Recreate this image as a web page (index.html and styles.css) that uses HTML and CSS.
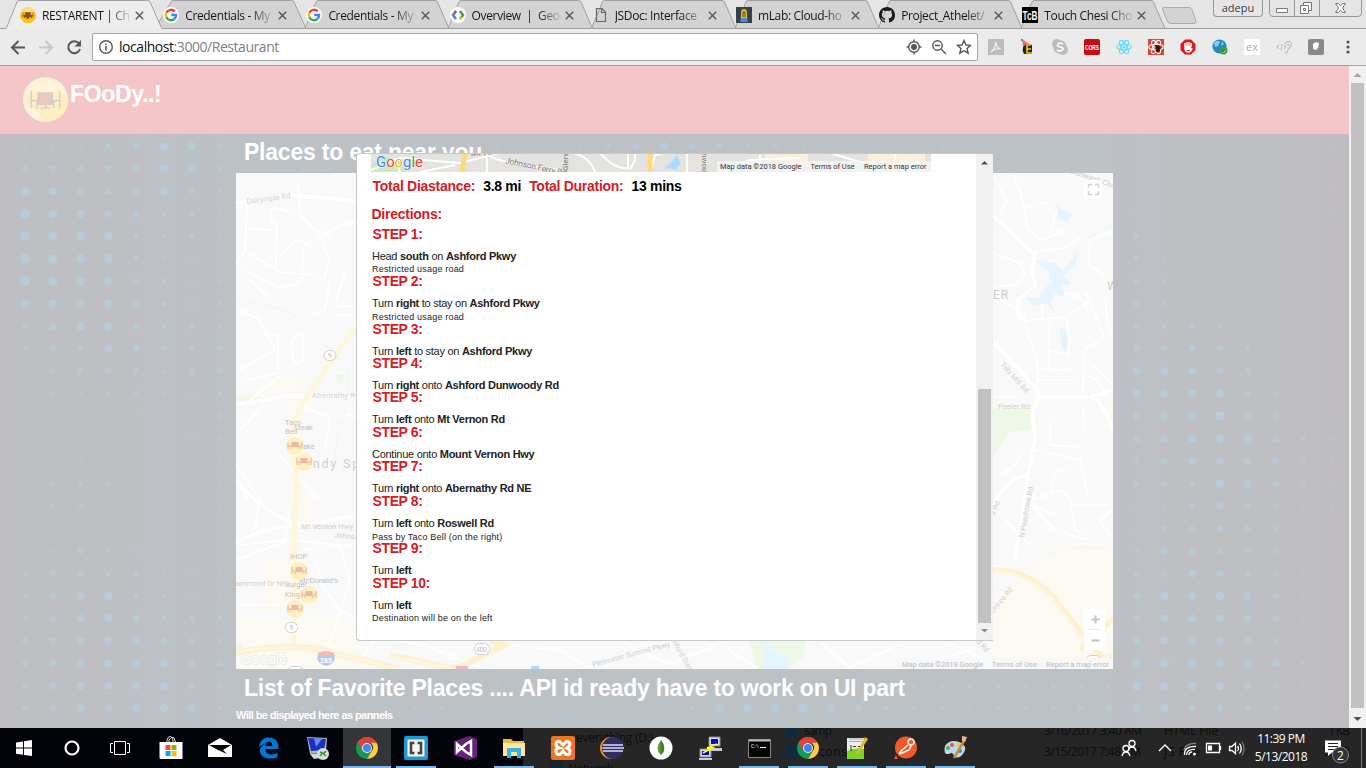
FILE: index.html
```html
<!DOCTYPE html>
<html lang="en">
<head>
<meta charset="utf-8">
<title>RESTARENT</title>
<link rel="stylesheet" href="styles.css">
</head>
<body>
<svg class="defs" width="0" height="0" aria-hidden="true">
  <defs>
    <symbol id="google" viewBox="0 0 16 16"><circle cx="8" cy="8" r="8" fill="#fff"/><path d="M3.3 5.7A5.2 5.2 0 0 1 11.7 4.3" fill="none" stroke="#ea4335" stroke-width="2.4"/><path d="M3.4 5.5A5.2 5.2 0 0 0 3.4 10.5" fill="none" stroke="#fbbc05" stroke-width="2.4"/><path d="M3.3 10.3A5.2 5.2 0 0 0 11.3 12" fill="none" stroke="#34a853" stroke-width="2.4"/><path d="M8.2 8H13.1A5.2 5.2 0 0 1 11.2 12.1" fill="none" stroke="#4285f4" stroke-width="2.4"/></symbol>
    <symbol id="food" viewBox="0 0 46 46"><circle cx="23" cy="23" r="23" fill="#ffdb75"/><path d="M0 23L8 15 18 28 26 46A23 23 0 0 1 0 23M8 15H39L46 21A23 23 0 0 1 20 46L8 31z" fill="#ffc40d"/><path d="M15 16H30V29H15zM21 29H25V33H18M8 14V32M8 24H14V32M38 14V32M38 24H32V32" fill="#a9412b" stroke="#554368" stroke-width="1.3"/></symbol>
    <symbol id="plate" viewBox="0 0 46 46"><circle cx="23" cy="23" r="23" fill="#fff3dc"/><path d="M0 23L8 15 38 15 46 21A23 23 0 0 1 24 46L8 30z" fill="#fdeec2"/><path d="M15 16H30V28H15z" fill="#ebcabd"/><path d="M15.500 16.500H30V28H15.500zM23 28V31M18 31.500H28M8.500 14V32M8.500 24H14.500V32M37.500 14V32M37.500 24H31.500V32" fill="none" stroke="#d3cdd2" stroke-width="1.400"/></symbol>
    <symbol id="pin" viewBox="0 0 20 20"><circle cx="10" cy="10" r="9" fill="#fdf0c0"/><path d="M3 6V13M3 10H6V13M17 6V13M17 10H14V13" stroke="#dcbd9b" fill="none"/><path d="M6.500 6H13.500V11H6.500z" fill="#eeb6ac"/></symbol>
    <symbol id="chrome" viewBox="0 0 22 22"><path d="M11 11L1.500 5.500A11 11 0 0 1 20.500 5.500H11z" fill="#dc4437"/><path d="M11 11L1.500 5.500A11 11 0 0 0 11 22L15.800 13.800z" fill="#0f9d58"/><path d="M20.500 5.500A11 11 0 0 1 11 22L15.800 13.800A5 5 0 0 0 13 5.500z" fill="#ffcd40"/><path d="M11 5.500H20.500A11 11 0 0 0 1.500 5.500L6.200 13.700z" fill="#dc4437"/><circle cx="11" cy="11" r="5" fill="#f1f1f1"/><circle cx="11" cy="11" r="4" fill="#4285f4"/></symbol>
    <symbol id="close" viewBox="0 0 9 9"><path d="M.8.8L8.200 8.200M8.200.8L.8 8.200" stroke="#5a5a5a" stroke-width="1.500"/></symbol>
    <symbol id="react" viewBox="0 0 16 16"><g fill="none" stroke="currentColor" stroke-width="1.100"><ellipse cx="8" cy="8" rx="7.300" ry="2.800"/><ellipse cx="8" cy="8" rx="7.300" ry="2.800" transform="rotate(60 8 8)"/><ellipse cx="8" cy="8" rx="7.300" ry="2.800" transform="rotate(120 8 8)"/></g><circle cx="8" cy="8" r="1.600" fill="currentColor"/></symbol>
  </defs>
</svg>

<header class="browser">
  <div class="strip">
    <svg class="tab-shapes" width="1366" height="29" viewBox="0 0 1366 29">
      <g fill="#d3d3d3" stroke="#9f9f9f">
        <path d="M1021 28.500L1032 2Q1032.500.5 1034 .5H1151Q1153 .5 1153.500 2L1165 28.500z"/>
        <path d="M878 28.500L889 2Q889.500.5 891 .5H1008Q1010 .5 1010.500 2L1022 28.500z"/>
        <path d="M735 28.500L746 2Q746.500.5 748 .5H865Q867 .5 867.500 2L879 28.500z"/>
        <path d="M591.500 28.500L602.500 2Q603 .5 604.500 .5H722Q724 .5 724.500 2L736 28.500z"/>
        <path d="M448 28.500L459 2Q459.500.5 461 .5H578.500Q580.500 .5 581 2L592.500 28.500z"/>
        <path d="M305 28.500L316 2Q316.500.5 318 .5H435Q437 .5 437.500 2L449 28.500z"/>
        <path d="M155 28.500L172 .5H291.500Q293.500 .5 294 2L306 28.500z"/>
      </g>
      <path d="M0 28.500H1366" stroke="#9f9f9f"/>
      <path d="M6 29L17 2Q17.500.5 19 .5H147.500Q149.500 .5 150 2L162 29z" fill="#ededed" stroke="#9f9f9f"/>
      <path d="M6.500 28.600H161.500" stroke="#ededed" stroke-width="2"/>
      <path d="M1163 7.500H1189Q1191 7.500 1192 9.500L1196 21.500Q1196 23.500 1194 23.500H1171Q1168.500 23.500 1167.500 21.500L1162.500 9.500Q1162 7.500 1164 7.500z" fill="#d3d3d3" stroke="#aaa"/>
    </svg>
    <div class="tab tab--active"><svg class="fav"><use href="#food"/></svg><span class="title">RESTARENT | Ch</span><svg class="x"><use href="#close"/></svg></div>
    <div class="tab"><svg class="fav"><use href="#google"/></svg><span class="title">Credentials - My</span><svg class="x"><use href="#close"/></svg></div>
    <div class="tab"><svg class="fav"><use href="#google"/></svg><span class="title">Credentials - My</span><svg class="x"><use href="#close"/></svg></div>
    <div class="tab"><svg class="fav" viewBox="0 0 16 16"><circle cx="8" cy="8" r="8" fill="#fff"/><path d="M6 4L3 8 6 12" fill="none" stroke="#4285f4" stroke-width="2.600"/><path d="M6 4L4.500 6" stroke="#ea4335" stroke-width="2.600"/><path d="M10 4L13 8 10 12" fill="none" stroke="#34a853" stroke-width="2.600"/><path d="M11.500 10L10 12" stroke="#fbbc05" stroke-width="2.600"/></svg><span class="title">Overview&nbsp; |&nbsp; Geo</span><svg class="x"><use href="#close"/></svg></div>
    <div class="tab"><svg class="fav" viewBox="0 0 16 16"><path d="M3.500 1.500H9L12.500 5V14.500H3.500zM8.500 1.500V5.500H12.500" fill="none" stroke="#666" stroke-width="1.200"/></svg><span class="title">JSDoc: Interface</span><svg class="x"><use href="#close"/></svg></div>
    <div class="tab"><svg class="fav" viewBox="0 0 16 16"><path d="M0 0H16V16H0z" fill="#33424d"/><path d="M5 14V6Q5 2 8 2T11 6V14z" fill="#f5b915"/><path d="M7 10V6Q8 3 9 6V10" fill="none" stroke="#33424d"/><path d="M4.500 11H11.500V15H4.500z" fill="#4c8fc5"/></svg><span class="title">mLab: Cloud-ho</span><svg class="x"><use href="#close"/></svg></div>
    <div class="tab"><svg class="fav" viewBox="0 0 16 16"><path fill="#1b1817" d="M8 0C3.580 0 0 3.580 0 8c0 3.540 2.290 6.530 5.470 7.590.4.070.55-.17.55-.38 0-.19-.01-.82-.01-1.490-2.010.37-2.530-.49-2.690-.94-.09-.23-.48-.94-.82-1.130-.28-.15-.68-.52-.01-.53.63-.01 1.080.58 1.230.82.720 1.210 1.870.87 2.330.66.070-.52.280-.87.510-1.070-1.780-.2-3.640-.89-3.640-3.950 0-.87.310-1.590.82-2.150-.08-.2-.36-1.020.08-2.120 0 0 .67-.21 2.200.82.640-.18 1.320-.27 2-.27s1.360.09 2 .27c1.530-1.040 2.200-.82 2.200-.82.440 1.100.160 1.920.08 2.120.51.560.82 1.270.82 2.150 0 3.070-1.870 3.750-3.650 3.950.29.250.54.730.54 1.480 0 1.070-.01 1.930-.01 2.200 0 .21.150.46.550.38A8 8 0 0 0 16 8c0-4.420-3.580-8-8-8"/></svg><span class="title">Project_Athelet/</span><svg class="x"><use href="#close"/></svg></div>
    <div class="tab"><svg class="fav" viewBox="0 0 16 16"><path d="M0 0H16V16H0z"/><text x=".5" y="13" font-size="13" textLength="15" lengthAdjust="spacingAndGlyphs" class="tcb">TcB</text></svg><span class="title">Touch Chesi Cho</span><svg class="x"><use href="#close"/></svg></div>
    <div class="winctl">
      <span class="user">adepu</span>
      <svg class="buttons" width="94" height="18" viewBox="0 0 94 18"><path d="M.5 0V13Q.5 16.500 4 16.500H89Q92.500 16.500 92.500 13V0M25.500 0V16M50.500 0V16" fill="none" stroke="#999"/><g fill="#fff" stroke="#777"><path d="M7.500 8.500H18.500V12.500H7.500z"/><path d="M34.500 2.500H42.500V10.500H34.500z"/><path d="M31.500 5.500H39.500V13.500H31.500z"/><path d="M34.500 8.500H36.500V10.500H34.500z"/><path d="M66.500 3.500H69.500L71.500 6 73.500 3.500H76.500L73.500 8 76.500 12.500H73.500L71.500 10 69.500 12.500H66.500L69.500 8z"/></g></svg>
    </div>
  </div>
  <div class="toolbar">
    <svg class="nav" width="92" height="36" viewBox="0 0 92 36"><g fill="none" stroke-width="2"><path d="M25 18.500H12.500M18.500 12L12 18.500 18.500 25" stroke="#555"/><path d="M39 18.500H51.500M45.500 12L52 18.500 45.500 25" stroke="#c8c8c8"/><path d="M79 14.500A6 6 0 1 0 80 20" stroke="#555"/></g><path d="M81 11V17.500H74.500z" fill="#555"/></svg>
    <div class="omnibox">
      <svg width="14" height="14" viewBox="0 0 14 14"><circle cx="7" cy="7" r="6.300" fill="none" stroke="#5a5a5a" stroke-width="1.400"/><path d="M7 6V10.500M7 3.500V5" stroke="#5a5a5a" stroke-width="1.600"/></svg>
      <span class="url">localhost<i>:3000/Restaurant</i></span>
      <svg class="omni-icons" width="66" height="18" viewBox="0 0 66 18"><g fill="none" stroke="#555" stroke-width="1.400"><circle cx="9" cy="9" r="5.300"/><path d="M9 1.500V4M9 14V16.500M1.500 9H4M14 9H16.500"/><circle cx="32.500" cy="7.500" r="4.700"/><path d="M36 11L41 16M30 7.500H35"/><path d="M59 2.500L61 7 65.500 7.400 62 10.600 63.200 15.200 59 12.700 54.800 15.200 56 10.600 52.500 7.400 57 7z"/></g><circle cx="9" cy="9" r="3" fill="#555"/></svg>
    </div>
    <div class="exts">
      <svg viewBox="0 0 16 16"><path d="M0 0H16V16H0z" fill="#bcbcbc"/><path d="M3 13Q8 9 7.500 3Q9 10 13 10Q8 8.500 3 13" fill="none" stroke="#eee" stroke-width="1.200"/></svg>
      <svg viewBox="0 0 16 16"><path d="M2 0L9 5 3 8z" fill="#ff5f8f"/><path d="M3 8Q7 3 12 6V15H4Q2 12 3 8" fill="#222"/><path d="M11 6H7V14H12M7 10H11" fill="none" stroke="#fc0" stroke-width="1.600"/><circle cx="2" cy="1" r="1.300" fill="#49b05c"/></svg>
      <svg viewBox="0 0 16 16"><circle cx="5" cy="5" r="5" fill="#bcbcbc"/><circle cx="11" cy="11" r="5" fill="#bcbcbc"/><circle cx="8" cy="8" r="6.800" fill="#bcbcbc"/><path d="M11 5Q8 3 6 5T8.500 8 10 11 5 11" fill="none" stroke="#fff" stroke-width="1.600"/></svg>
      <svg viewBox="0 0 16 16"><rect width="16" height="16" rx="2" fill="#c90b0b"/><text x="1" y="11" textLength="14" lengthAdjust="spacingAndGlyphs" class="cors">CORS</text></svg>
      <svg class="react-blue"><use href="#react"/></svg>
      <svg class="react-white" viewBox="0 0 16 16"><path d="M0 0H16V16H0z" fill="#db4437"/><use href="#react" width="16" height="16"/><path d="M7 6H11L13 9 11 13H8z" fill="#3a1713"/></svg>
      <svg viewBox="0 0 16 16"><path d="M5 .5H11L15.500 5V11L11 15.500H5L.5 11V5z" fill="#e01717"/><path d="M5 8V4M7 8V3M9 8V3M11 8V4M5 8V10Q6 13 8 13Q11 13 12 9" fill="none" stroke="#fff" stroke-width="1.500"/><path d="M5 7H11V11H6z" fill="#fff"/></svg>
      <svg viewBox="0 0 16 16"><circle cx="7.500" cy="7.500" r="7" fill="#1d87c8"/><path d="M2 4Q6 0 8 3L6 7 3 8M10 2L12 5 9 7" fill="#8acdf0"/><circle cx="11.500" cy="11.500" r="3" fill="none" stroke="#4c9c2c" stroke-width="2"/></svg>
      <svg viewBox="0 0 16 16"><path d="M0 0H16V16H0z" fill="#fff"/><text x="2" y="11.500" class="ex">ex</text></svg>
      <svg viewBox="0 0 16 16"><path d="M3 6L1 8 3 10M6 5L5 11M8 6L10 8 8 10M9 5Q11 1 14 3T14 8 11 13 9 13M11 6Q13 4 13 7" fill="none" stroke="#bdbdbd" stroke-width="1.100"/></svg>
      <svg viewBox="0 0 16 16"><rect width="16" height="16" rx="2" fill="#888"/><path d="M5 5Q7 2 11 4Q11 9 8 11L5 10z" fill="#fff"/></svg>
      <svg class="menu" viewBox="0 0 4 16"><g fill="#555"><circle cx="2" cy="3" r="1.600"/><circle cx="2" cy="8" r="1.600"/><circle cx="2" cy="13" r="1.600"/></g></svg>
    </div>
  </div>
</header>

<div class="viewport">
  <main class="page">
    <nav class="brandbar"><svg class="logo"><use href="#plate"/></svg><h1>FOoDy..!</h1></nav>
    <section class="content">
      <svg id="dots" class="dots" width="1349" height="594" viewBox="0 134 1349 594"></svg>
      <div class="column">
        <h2 class="near">Places to eat near you...</h2>
        <svg class="map" viewBox="236 173 877 496">
          <path d="M236 173H1113V669H236z" fill="#f9f9f9"/>
          <g fill="#fcfaf3"><path d="M268 380L298 377 299 394 268 395zM290 395L314 398 300 430 285 428zM300 494H315L312 520 300 530zM262 560L286 558 300 575 298 605 262 612zM236 620H360V669H236zM1100 420L1113 402V436z"/><path d="M1040 560Q1060 535 1113 548V669H993V600Q1020 570 1040 560z"/></g>
          <g fill="#e5f4ff"><path d="M1056 203L1060 209 1072 214 1067 222 1059 218zM1032 259L1056 264 1064 272 1078 251 1075 265 1063 275 1072 284 1062 285 1064 296 1054 294 1051 304 1055 314 1047 303 1033 306 1025 298 1038 298 1050 282 1048 271zM1060 329L1066 329 1068 345 1065 352 1061 342z"/></g>
          <g fill="#edf9e6"><path d="M993 408H1033L1030 430 1010 432 993 456zM336 375L344 374 343 382 338 384zM236 398Q250 394 262 396L260 400 236 402zM236 643H242V655H236zM750 641H806L803 658 785 669H757z"/></g><path d="M764 643L780 655 791 658 786 669H763z" fill="#e3f5ff"/>
          <g fill="none" stroke="#eef6fc" stroke-width="1.200"><path d="M236 302Q280 303 300 320L330 349 348 368V400L338 430 334 470M993 226L1010 240 1032 257M993 286L1025 298M1063 272L1083 240 1113 225M1032 573L1045 556 1080 547 1113 549M993 593L1020 583"/></g>
          <g fill="none" stroke="#fff" stroke-width="1.700">
            <path d="M247 204L245 250 236 264M247 252L280 272 312 275M275 205Q265 218 277 224L276 268M250 229L274 230M272 207L298 214M298 182L300 215 320 235 329 260 324 280 305 272M280 258L290 245Q300 235 310 247M302 270L304 245 340 226 357 222M245 270L278 287 295 285 305 275M315 228L330 236M250 280L270 298M310 315L325 310 330 280 M345 273L336 300M338 306H357M335 315H356M238 310L258 318 275 350 236 372M264 335H278V373L243 381M292 340Q303 325 303 345V360Q293 370 292 350zM250 400L280 376M236 435L263 405V395L250 398M300 405L330 418 325 450M340 420Q350 410 357 420M236 465L260 500 255 530M290 505L285 540 240 545M236 560L290 540 340 545 350 580 330 645M300 550L350 545M315 560L325 590 340 610 357 620M245 585L285 585M236 605H290M280 455L300 480 320 500M236 480L248 500"/>
            <path d="M993 176L1007 200 1000 215M1013 175L1020 190 1028 230 1042 240 1065 230M1028 207L1045 202 1055 215 1050 235M1032 252L1064 248 1080 238M1113 230L1090 240 1088 265 1105 275M993 253L1020 263 1025 275 1015 285 993 287M993 294L1025 315M1042 305V320M1024 320L1038 365 1037 395M1023 321L1066 317 1088 302 1085 290M1066 317L1070 340 1068 355 1048 350M1050 321L1048 365M1037 369L1070 370M1035 380H1078M1084 350L1104 337 1087 293M1084 353L1083 395M1084 376Q1100 375 1105 397M1091 364L1113 384M1066 292Q1090 300 1086 314M1106 300Q1105 320 1111 335M1083 411L1084 430M1050 420V445L1078 447M1035 450L1080 460 1088 495M1051 492L1055 472 1067 469M1038 486L1030 505 1058 515M1033 500L1060 490 1070 498 1075 530 1083 533M1070 505H1110M1032 506L1055 530 1086 540M1112 510L1100 520 1110 535M1005 520L1030 545M1001 475L1015 465 1023 453M993 397H1015"/>
            <path d="M362 658L375 640 420 643 480 668M500 645L560 650 590 669M620 641L670 665 720 643 757 669M820 642L850 668 900 644M910 669L975 648M950 643L1000 668"/>
          </g>
          <g fill="none" stroke="#fff" stroke-width="3.500"><path d="M236 203L290 195 357 201M236 404L290 396 357 397M236 543Q265 525 300 526L357 515M236 480Q265 515 300 525M993 215L1035 255 1032 270 1035 285 1018 300 1018 315 1026 321M993 341L1015 365 1037 390 1040 397H1090L1113 390M1090 397Q1105 402 1112 430M1038 397L1032 415 1035 440 1028 475 1015 560"/><path d="M993 506Q1004 480 1028 475M993 567L1030 576"/></g>
          <g fill="none"><path d="M357 325Q335 355 315 385 285 425 292 450 300 490 294 530V650" stroke="#fff7da" stroke-width="5"/><path d="M236 653Q300 640 340 655L400 669M993 570Q1030 570 1055 600L1095 650 1113 669M1080 650L1098 630 1113 620M390 655L455 669 505 645 490 641M1080 669L1113 655" stroke="#fff1cd" stroke-width="6"/><path d="M236 652Q300 641 340 655L400 669M993 572Q1030 571 1055 603L1095 654M390 656L455 669" stroke="#fff6e0" stroke-width="3"/></g>
          <g class="roadname"><text x="247" y="204" transform="rotate(-8 247 204)" textLength="44">Dalrymple Rd</text><text x="312" y="398" textLength="60">Abernathy Rd NE</text><text x="301" y="529" textLength="52">Mt Vernon Hwy</text><text x="334" y="537" transform="rotate(7 334 537)">Johnson</text><text x="236" y="586" textLength="50">ammond Dr NE</text><text x="1070" y="173" transform="rotate(19 1070 173)" textLength="48">Dunwoody Club</text><text x="1000" y="365" transform="rotate(48 1000 365)">Tilly Mill Rd</text><text x="998" y="409">Peeler Rd</text><text x="1024" y="538" transform="rotate(-80 1024 538)">N Peachtree Rd</text><text x="993" y="614" transform="rotate(-50 993 614)">chtree Rd</text><text x="994" y="516" transform="rotate(-65 994 516)">d Rd</text><text x="593" y="667" transform="rotate(-15 593 667)" textLength="80">Perimeter Summit Pkwy</text><text x="672" y="642" transform="rotate(60 672 642)">hford Dun</text><text x="976" y="642" transform="rotate(47 976 642)">d Rd</text></g>
          <g class="place"><text x="285" y="425">Taco</text><text x="285" y="434">Bell</text><text x="294" y="430">Steak</text><text x="303" y="449">ake</text><text x="290" y="559">IHOP</text><text x="285" y="587">Burger</text><text x="285" y="597">King</text><text x="299" y="583">McDonald's</text></g>
          <g class="city"><text x="313" y="468" textLength="58">ndy Spri</text><text x="993" y="299">ER</text><text x="1107" y="290">W</text></g>
          <g><use href="#pin" x="285" y="436" width="20" height="20"/><use href="#pin" x="294" y="452" width="20" height="20"/><use href="#pin" x="289" y="561" width="20" height="20"/><use href="#pin" x="299" y="585" width="20" height="20"/><use href="#pin" x="285" y="599" width="20" height="20"/></g>
          <g fill="#fff" stroke="#d0d0d0"><rect x="324" y="350.500" width="12" height="10" rx="5"/><rect x="285.500" y="622.500" width="12" height="10" rx="5"/><rect x="474.500" y="643.500" width="15" height="11" rx="5"/><rect x="288.500" y="666.500" width="14" height="10" rx="4"/><rect x="1086" y="655.500" width="15" height="10" rx="5"/></g><g class="shieldtext"><text x="328" y="358">9</text><text x="289.500" y="630">9</text><text x="476" y="651.500">400</text></g>
          <path d="M318 654Q326 650 334 654Q337 663 326 666Q315 663 318 654" fill="#b8c8e8"/><path d="M318 653Q326 649 334 653V656H318z" fill="#f5b9b4"/><text x="320" y="663" font-size="7" fill="#fff" class="bold">285</text><path d="M456 666H468V669H456z" fill="#efb9c5"/><path d="M531 666H539V669H531z" fill="#acdcf6"/>
          <text x="241" y="664" textLength="46" class="maplogo">Google</text>
          <path d="M897 658H1113V669H897z" fill="#f8f8f8"/><g class="legal"><text x="902" y="666.500" textLength="81">Map data ©2018 Google</text><text x="992" y="666.500" textLength="45">Terms of Use</text><text x="1046" y="666.500" textLength="63">Report a map error</text></g>
          <path d="M1084 180H1102V199H1084zM1084 609H1105V650H1084z" fill="#fff"/><path d="M1088.500 188V184.500H1092M1095 184.500H1098.500V188M1098.500 191V194.500H1095M1092 194.500H1088.500V191" fill="none" stroke="#d1d1d1" stroke-width="1.500"/><path d="M1091.500 619.500H1099.500M1095.500 615.500V623.500M1091.500 640.500H1099.500" stroke="#c4c4c4" stroke-width="2"/><path d="M1088 629.500H1102" stroke="#eee"/>
        </svg>
        <h2 class="list">List of Favorite Places .... API id ready have to work on UI part</h2>
        <p class="panels">Will be displayed here as pannels</p>
      </div>
    </section>
  </main>
  <div class="pagebar"><svg width="17" height="17"><path d="M4.500 11L8.500 7 12.500 11z" fill="#a3a3a3"/></svg><div class="thumb"></div><svg width="17" height="17"><path d="M4.500 9L8.500 13 12.500 9z" fill="#505050"/></svg></div>

  <div class="modal">
    <div class="modal-body">
      <svg class="minimap" width="560" height="19" viewBox="371 153 560 19">
        <path d="M371 153H931V172H371z" fill="#e5e3df"/><path d="M371 164L385 156 403 163 410 172H371z" fill="#cceac1"/><path d="M765 153H808V165L765 160zM868 153H925V172H868z" fill="#faf0dc"/>
        <path d="M664 169L673 160 677 155 680 163 676 170 670 168z" fill="#a9daff"/>
        <g fill="none" stroke="#fff" stroke-width="2"><path d="M371 170L400 158 460 163 500 153M400 172L395 158M420 172L455 165M490 157L510 163 560 170M487 172V153M573 153Q590 157 595 172M600 153Q615 170 628 168V153M630 170L635 160V153M650 172L655 155 664 153M687 153V172M718 172L750 160 800 158M760 172V155M830 153L860 162H920M895 153V172"/></g>
        <path d="M462 172L465 153M650 153V172" stroke="#ffda7a" stroke-width="5"/>
        <g class="miniroad"><text x="471" y="156" transform="rotate(-4 471 156)">Mt Vernon Hwy</text><text x="505" y="163" transform="rotate(12 505 163)">Johnson Ferry Rd</text><text x="568" y="171" transform="rotate(-90 568 171)">Glenri</text><text x="702" y="153" transform="rotate(90 702 153)">nwood</text></g>
        <text x="376" y="167" textLength="47" lengthAdjust="spacingAndGlyphs" class="glogo"><tspan fill="#4285f4">G</tspan><tspan fill="#ea4335">o</tspan><tspan fill="#fbbc05">o</tspan><tspan fill="#4285f4">g</tspan><tspan fill="#34a853">l</tspan><tspan fill="#ea4335">e</tspan></text>
        <path d="M717 161H931V172H717z" fill="#f5f5f5" opacity=".8"/><g class="legal dark"><text x="720" y="169.300" textLength="81.500">Map data ©2018 Google</text><text x="810.500" y="169.300" textLength="44">Terms of Use</text><text x="864" y="169.300" textLength="62.500">Report a map error</text></g>
      </svg>
      <p class="totals"><b>Total Diastance:</b><strong>3.8 mi</strong><b>Total Duration:</b><strong>13 mins</strong></p>
      <h3 class="dirs">Directions:</h3>
      <ol class="steps">
        <li><h4>STEP 1:</h4><p>Head <b>south</b> on <b>Ashford Pkwy</b></p><small>Restricted usage road</small></li>
        <li><h4>STEP 2:</h4><p>Turn <b>right</b> to stay on <b>Ashford Pkwy</b></p><small>Restricted usage road</small></li>
        <li><h4>STEP 3:</h4><p>Turn <b>left</b> to stay on <b>Ashford Pkwy</b></p></li>
        <li><h4>STEP 4:</h4><p>Turn <b>right</b> onto <b>Ashford Dunwoody Rd</b></p></li>
        <li><h4>STEP 5:</h4><p>Turn <b>left</b> onto <b>Mt Vernon Rd</b></p></li>
        <li><h4>STEP 6:</h4><p>Continue onto <b>Mount Vernon Hwy</b></p></li>
        <li><h4>STEP 7:</h4><p>Turn <b>right</b> onto <b>Abernathy Rd NE</b></p></li>
        <li><h4>STEP 8:</h4><p>Turn <b>left</b> onto <b>Roswell Rd</b></p><small>Pass by Taco Bell (on the right)</small></li>
        <li><h4>STEP 9:</h4><p>Turn <b>left</b></p></li>
        <li><h4>STEP 10:</h4><p>Turn <b>left</b></p><small>Destination will be on the left</small></li>
      </ol>
    </div>
    <div class="modalbar"><svg width="17" height="17"><path d="M5 10.500L8.500 7 12 10.500z" fill="#505050"/></svg><div class="thumb"></div><svg width="17" height="17"><path d="M5 6L8.500 9.500 12 6z" fill="#8a8a8a"/></svg></div>
  </div>
</div>

<footer class="taskbar">
  <svg class="ghost" width="843" height="40" viewBox="523 728 843 40"><path d="M786 728H797V737H786zM786 744H797V758H786z" fill="#102a3c"/><circle cx="556" cy="765" r="7" fill="#15242d"/><g class="ghosttext"><text x="576" y="742" textLength="77">everything (D:)</text><text x="568" y="773" textLength="45">Network</text><text x="804" y="735" textLength="28">samp</text><text x="804" y="756" textLength="43">bycons</text><text x="1044" y="735" textLength="98">3/16/2017 3:40 AM</text><text x="1044" y="756" textLength="97">3/15/2017 7:48 AM</text><text x="1164" y="735" textLength="54">HTML File</text><text x="1164" y="756" textLength="36">JS File</text><text x="1328" y="735" textLength="22">1 KB</text><text x="1322" y="756" textLength="28">15 KB</text></g></svg>
  <div class="sys">
    <svg viewBox="0 0 24 24"><path d="M4 6.500L11 5.500V11.500H4zM12 5.300L20 4V11.500H12zM4 12.500H11V18.700L4 17.700zM12 12.500H20V20L12 18.900z" fill="#fff"/></svg>
    <svg viewBox="0 0 24 24"><circle cx="12" cy="12" r="6.500" fill="none" stroke="#fff" stroke-width="2.200"/></svg>
    <svg viewBox="0 0 24 24"><path d="M6.500 5.500H17.500V18.500H6.500zM5 7.500H2.500V16.500H5M19 7.500H21.500V16.500H19" fill="none" stroke="#fff"/></svg>
  </div>
  <div class="apps">
    <span><svg viewBox="0 0 24 24"><path d="M.5 6H23.500V23H2Q.5 23 .5 21.500z" fill="#fff"/><path d="M8 6V4Q9 0 11.500 .5T14 6M10 6V4Q12 0 15 2L16.500 6" fill="none" stroke="#ddd"/><path d="M6.500 9H11.500V14H6.500z" fill="#f35325"/><path d="M12.500 9H17.500V14H12.500z" fill="#81bc06"/><path d="M6.500 15H11.500V20H6.500z" fill="#05a6f0"/><path d="M12.500 15H17.500V20H12.500z" fill="#ffba08"/></svg></span>
    <span><svg viewBox="0 0 24 24"><path d="M0 9L12 2 24 9V21H0z" fill="#fff"/><path d="M1 9H23L15 14 19 18 10 14z" fill="#000"/></svg></span>
    <span><svg viewBox="0 0 24 24"><path d="M2 11C3 4 7 1.500 12 1.500c7 0 10 5 9.500 11.500H8.500c0 6 7 7 12 3.500V21c-6 3-16 2-17.500-5C2.500 12 5 9 9 7.500 5.500 8 3.500 9.500 2 11zM8.500 10H15.500Q15 5.500 12 5.500T8.500 10z" fill="#0078d7"/></svg></span>
    <span><svg viewBox="0 0 24 24"><path d="M1 1L21 2 20 16 4 18z" fill="#aab5c8"/><path d="M2 2L20 3 18 14 5 15z" fill="#1732bd"/><path d="M8 2L16 3 10 11z" fill="#6d8ef0"/><path d="M4 18L18 17 19 21 8 23z" fill="#d8d8d8"/><circle cx="17" cy="18" r="6" fill="#ddd"/><path d="M14 20L16.500 17 14 16M20 15L17.500 18 20 20" stroke="#2e963c" stroke-width="1.500" fill="none"/></svg></span>
    <span class="active"><svg viewBox="0 0 24 24"><use href="#chrome" x="1" y="1" width="22" height="22"/></svg></span>
    <span class="running"><svg viewBox="0 0 24 24"><rect width="24" height="24" rx="2" fill="#1b9ad6"/><rect x="3.500" y="3.500" width="17" height="17" fill="#f6f6f6"/><path d="M10.500 7H7V17H10.500M13.500 7H17V17H13.500" fill="none" stroke="#444" stroke-width="2.600"/></svg></span>
    <span><svg viewBox="0 0 24 24"><path d="M17 0L24 3V21L17 24 1 19V5z" fill="#68217a"/><path d="M4 8L13 16 18 19V5L13 8 4 16z" fill="none" stroke="#fff" stroke-width="2.500"/></svg></span>
    <span class="running"><svg viewBox="0 0 24 24"><path d="M1 3H9L11 5H22V20H1z" fill="#e9b949"/><path d="M1 7H23V20H1z" fill="#ffe69b"/><path d="M5 12H19V22H15V16H9V22H5z" fill="#38b1eb"/></svg></span>
    <span><svg viewBox="0 0 24 24"><rect width="24" height="24" rx="2" fill="#ee7623"/><path d="M8.500 5.500Q5 5 5 8T8 12Q4 13 5 16T9 18.500L12 15 15 18.500Q19 19 19 16T16 12Q19 10 19 8T15.500 5.500L12 9z" fill="none" stroke="#fff" stroke-width="3"/></svg></span>
    <span><svg viewBox="0 0 24 24"><circle cx="11" cy="12" r="11" fill="#f7941e"/><circle cx="13" cy="12" r="11" fill="#322d60"/><path d="M3 9H23M2.500 12H24M3 15H23" stroke="#e1def3" stroke-width="1.700"/></svg></span>
    <span><svg viewBox="0 0 24 24"><circle cx="12" cy="12" r="11.500" fill="#fff"/><path d="M12 4Q19 13 12 19Q5 13 12 4" fill="#589636"/><path d="M12 4Q18 13 12 19z" fill="#3d7c35"/></svg></span>
    <span><svg viewBox="0 0 24 24"><path d="M11 1H22V10H11zM2 13H13V21H2z" fill="#ddd" stroke="#888"/><path d="M13 3H20V8H13zM4 15H11V19H4z" fill="#00f"/><path d="M10 12H24V15H10zM1 22H14V24H1z" fill="#ccc"/><path d="M19 8L9 12H14L5 17" fill="none" stroke="#ff0" stroke-width="1.800"/></svg></span>
    <span class="running"><svg viewBox="0 0 24 24"><path d="M1.500 3.500H23.500V21.500H1.500z" fill="#050505" stroke="#888"/><path d="M2 3.500H23V5.500H2z" fill="#bbb"/><text x="4" y="12" textLength="8" class="cmd">C:\</text><path d="M13 11.500H19" stroke="#fff"/></svg></span>
    <span class="running"><svg viewBox="0 0 24 24"><use href="#chrome" x="1" y="1" width="22" height="22"/></svg></span>
    <span class="running"><svg viewBox="0 0 24 24"><path d="M2 2H19V23H2z" fill="#eee"/><path d="M2 15Q10 11 19 13V23H2z" fill="#7dd223"/><path d="M4 3H18M4 5.500H17" stroke="#aaa"/><path d="M6 9V15M8 10.500H11M13 10.500H17" stroke="#333"/><path d="M20 1L23 3 14 17 11 19 12 16z" fill="#e8b827"/></svg></span>
    <span class="running"><svg viewBox="0 0 24 24"><circle cx="12" cy="11.500" r="11" fill="#f15a29"/><path d="M2 19L4 23 0 23z" fill="#f15a29"/><path d="M14 9L7 15 5 18M18 8L15 14 8 17 5 18M17 3A3 3 0 1 0 17.200 3" fill="none" stroke="#fff" stroke-width="1.400"/></svg></span>
    <span class="running"><svg viewBox="0 0 24 24"><path d="M2 10Q7 3 16 6 26 10 20 18 15 24 11 20 10 15 6 18 0 19 2 10" fill="#b9d9ed"/><circle cx="5" cy="12" r="2" fill="#4da94d"/><circle cx="9" cy="9" r="2" fill="#d55"/><circle cx="15" cy="9" r="2" fill="#f2ca48"/><circle cx="17" cy="15" r="2" fill="#2a92c8"/><path d="M11 22L22 3" stroke="#cc8a37" stroke-width="2.500"/><path d="M19 0L24 1 22 6 19 5z" fill="#e2b98d"/></svg></span>
  </div>
  <svg class="tray" width="132" height="40" viewBox="1116 728 132 40"><g fill="none" stroke="#fff" stroke-width="1.300"><circle cx="1132" cy="743.500" r="3"/><path d="M1128 751Q1129 747 1132 747T1136 751"/><circle cx="1126" cy="748.500" r="3"/><path d="M1122 756Q1123 752 1126 752T1130 756"/><path d="M1159 751L1165 745 1171 751"/><path d="M1189 755Q1189 752 1192 752M1186.500 755Q1187 749 1195 749.500M1184.500 755Q1184 746 1196 746.500" /><path d="M1184 750Q1186 743 1196 743.500" stroke="#888"/><path d="M1206.500 743.500H1219.500V752.500H1206.500zM1220.500 746V750"/><path d="M1229.500 746.500H1232L1235.500 743V753.500L1232 750.500H1229.500z"/><path d="M1237.500 746Q1239.500 748.500 1237.500 751M1239.500 743.500Q1243 748.500 1239.500 753.500"/><path d="M1242 741.500Q1246 748.500 1242 755.500" stroke="#777"/></g><path d="M1208 745.500H1212V750.500H1208z" fill="#fff"/><circle cx="1194.500" cy="754" r="1.500" fill="#fff"/></svg>
  <div class="clock"><span>11:39 PM</span><span>5/13/2018</span></div>
  <svg class="action" width="42" height="40" viewBox="1324 728 42 40"><path d="M1325 740.500H1341V752.500H1332L1328 756V752.500H1325z" fill="#fff"/><path d="M1328 743.500H1338M1328 746.500H1338M1328 749.500H1335" stroke="#222"/><circle cx="1340.500" cy="755" r="8" fill="#333" stroke="#888"/><text x="1337" y="759.500" class="badge">2</text><path d="M1361.500 728V768" stroke="#777"/></svg>
</footer>
<script src="dots.js"></script>
</body>
</html>
```
FILE: styles.css
```css
* { box-sizing: border-box; }
body { margin: 0; width: 1366px; height: 768px; overflow: hidden; display: flex; flex-direction: column; font-family: "Liberation Sans", Arial, sans-serif; }
h1, h2, h3, h4, p, ol { margin: 0; padding: 0; }
.defs { position: absolute; }
svg { display: block; flex: none; }

.browser { height: 66px; background: #ebebeb; border-bottom: 1px solid #a3a3a3; font-family: "Open Sans", "Noto Sans", sans-serif; }
.strip { position: relative; display: flex; height: 29px; padding-left: 20px; background: #e5e5e5; }
.tab-shapes { position: absolute; left: 0; top: 0; }
.tab { position: relative; display: flex; align-items: center; width: 143.200px; height: 29px; padding-top: 1px; }
.fav { width: 16px; height: 16px; }
.title { width: 88px; margin-left: 6px; overflow: hidden; white-space: nowrap; font-size: 12px; letter-spacing: -.35px; color: #151515; -webkit-mask-image: linear-gradient(90deg, #000 74%, transparent 104%); mask-image: linear-gradient(90deg, #000 74%, transparent 104%); }
.x { width: 9px; height: 9px; margin-left: 5px; }
.tcb { fill: #fff; font-family: "Liberation Sans"; font-weight: bold; }
.winctl { position: relative; display: flex; margin-left: 47.400px; gap: 6px; }
.user { width: 50px; height: 17px; border: 1px solid #999; border-top: 0; border-radius: 0 0 4px 4px; text-align: center; font-size: 11px; line-height: 16px; color: #333; text-shadow: 0 0 2px #fff; }
.toolbar { display: flex; height: 36px; align-items: center; }
.omnibox { display: flex; align-items: center; width: 886px; height: 28px; padding: 0 6px 0 6px; background: #fff; border: 1px solid #a4a4a4; border-radius: 2px; }
.url { margin-left: 6px; font-size: 14px; letter-spacing: -.45px; line-height: 20px; color: #111; }
.url i { font-style: normal; color: #808080; }
.omni-icons { margin-left: auto; }
.exts { display: flex; gap: 16px; margin-left: 10px; align-items: center; }
.exts svg { width: 16px; height: 16px; }
.exts .menu { width: 4px; margin-left: 6px; }
.react-blue { color: #61dafb; }
.react-white { color: #fff; }
.cors { fill: #fff; font: bold 8px "Liberation Sans"; }
.ex { fill: #aaa; font: 11px "Open Sans"; }

.viewport { position: relative; display: flex; height: 662px; }
.page { width: 1349px; }
.brandbar { display: flex; height: 68px; padding: 11px 0 0 23px; background: #f4c6c8; }
.logo { width: 45px; height: 45px; }
.brandbar h1 { margin-left: 2px; font-size: 23px; line-height: 34px; color: #fff; letter-spacing: -.35px; }
.content { position: relative; height: 594px; background: linear-gradient(90deg, #bfbfc2 0, #bebfc3 90px, #bcc1c6 230px, #bcc1c6 1100px, #bebfc3 1200px, #bebfc3 1290px, #bfbbc1 1349px); }
.dots { position: absolute; left: 0; top: 0; }
.dots circle { fill: #b6cfe0; }
.column { position: relative; width: 877px; margin-left: 236px; }
.column h2 { padding-left: 8px; font-size: 23px; color: #fff; white-space: nowrap; letter-spacing: -.22px; }
.near { height: 39px; line-height: 36px; }
.map { width: 877px; height: 496px; }
.map text { font-family: Roboto, sans-serif; }
.roadname { font-size: 7.500px; fill: #cfcfcf; }
.place { font-size: 7.500px; fill: #c0c0c0; }
.city { font-size: 12px; fill: #cccdd0; letter-spacing: 1px; }
.shieldtext { font-size: 6.500px; fill: #bbb; }
.bold { font-weight: bold; }
.maplogo { font-size: 15px; fill: #fff; stroke: #e0e0e0; stroke-width: 1px; paint-order: stroke; }
.legal { font-size: 7.500px; fill: #bbb; }
.legal.dark { fill: #333; font-family: Roboto, sans-serif; }
.list { height: 36px; line-height: 38px; }
.panels { font-size: 11px; font-weight: bold; line-height: 20px; color: #fff; letter-spacing: -.57px; }
.pagebar { display: flex; flex-direction: column; width: 17px; background: #f1f1f1; }
.pagebar .thumb { width: 13px; height: 625px; margin-left: 2px; background: #c1c1c1; }

.modal { position: absolute; left: 356px; top: 87px; width: 637px; height: 488px; display: flex; overflow: hidden; background: #fff; border: 1px solid #c6c8ca; border-right: 0; border-radius: 4px 0 0 4px; }
.modal-body { width: 619px; padding-left: 15px; }
.minimap { margin-left: -1px; margin-top: -1px; }
.miniroad text { font: 8px Roboto; fill: #777; }
.glogo { font: 15px Roboto, sans-serif; stroke: #fff; stroke-width: .8px; paint-order: stroke; }
.totals { display: flex; gap: 8px; height: 28px; padding-left: .5px; font-size: 14px; line-height: 29px; color: #000; white-space: nowrap; letter-spacing: -.28px; }
.totals b, .dirs, .steps h4 { color: #d32027; }
.dirs { height: 26px; font-size: 14px; line-height: 28px; letter-spacing: -.25px; margin-left: -.5px; }
.steps { list-style: none; padding-top: .6px; }
.steps h4 { height: 14px; margin-bottom: 9px; padding-left: .5px; font-size: 14px; line-height: 14px; letter-spacing: -.38px; }
.steps p { height: 11.450px; font-size: 11px; line-height: 12px; letter-spacing: -.27px; color: #222; }
.steps small { display: block; height: 8.700px; margin-top: 4.350px; font-size: 9px; line-height: 9px; letter-spacing: .19px; color: #222; }
.modalbar { width: 17px; display: flex; flex-direction: column; background: #f1f1f1; }
.modalbar .thumb { width: 13px; height: 234px; margin: 218px 0 0 2px; background: #c1c1c1; }

.taskbar { position: relative; display: flex; height: 40px; background: linear-gradient(90deg, #02040a 523px, #262626 523px); font-family: "Open Sans", sans-serif; }
.ghost { position: absolute; left: 523px; top: 0; }
.ghosttext text { font: 12px "Open Sans"; fill: #0c0c0c; }
.sys, .apps { position: relative; display: flex; }
.sys { width: 147px; }
.sys svg { width: 24px; height: 24px; margin: 8px 12px; }
.apps span { width: 48px; height: 40px; margin-right: 1px; padding: 8px 12px; }
.apps svg { width: 24px; height: 24px; }
.apps .active { background: #343538; border-bottom: 2px solid #76b9ed; }
.apps .running { background: linear-gradient(#76b9ed, #76b9ed) 4px 38px / 40px 2px no-repeat; }
.cmd { fill: #fff; font: 5px "Liberation Mono"; }
.tray { position: relative; margin-left: 136px; }
.clock { position: relative; width: 66px; display: flex; flex-direction: column; align-items: center; padding-top: 2px; font-size: 12px; line-height: 18px; letter-spacing: -.5px; color: #fff; }
.action { position: relative; margin-left: 10px; }
.badge { font: 12px "Open Sans"; fill: #fff; }
```
FILE: dots.js
```js
// Halftone background: each figure is a dot radius in half pixels.
var left = ["44467986","66667986","98767865","a9877654","a9986554","a9986543","a9986644","89997655","67897665","56677666","35666556","34445446","24443335","23332244","23432224","34542024","35532024","24432023","34654223","56766444","57886544","57887656","66888766","67888876","67888876","66878885"];
var right = ["00002245","00000234","22002235","42322235","52320224","64320022","65422222","65542222","66652222","76765222","88876323","88887533","889a8655","7789a765","56888865","56688765","44677655","46676654","57766643","66876654","78898753","78888753","88887644","99988864","98888654","88776543"];
var svg = document.getElementById("dots");
function dot(col, row, half) {
  if (!half) return;
  var c = document.createElementNS("http://www.w3.org/2000/svg", "circle");
  c.setAttribute("cx", 25 + col * 27.79);
  c.setAttribute("cy", 146.3 + row * 22.48);
  c.setAttribute("r", half / 2);
  c.setAttribute("opacity", Math.min(.75, .1 + half / 12) * (col > 43 ? 1 - (col - 43) * .12 : 1));
  svg.appendChild(c);
}
function row(text, first, r) {
  for (var i = 0; i < text.length; i++) dot(first + i, r, parseInt(text[i], 16));
}
left.forEach(function (t, r) { row(t, 0, r); });
right.forEach(function (t, r) { row(t, 40, r); });
row("24566544443345787755432344333222", 8, 0);
row("34555433222222", 8, 1);
row("222222234455433222211335", 8, 24);
row("55665555", 32, 24);
row("5456454542210111598898765545", 8, 25);
row("5567", 36, 25);
```
